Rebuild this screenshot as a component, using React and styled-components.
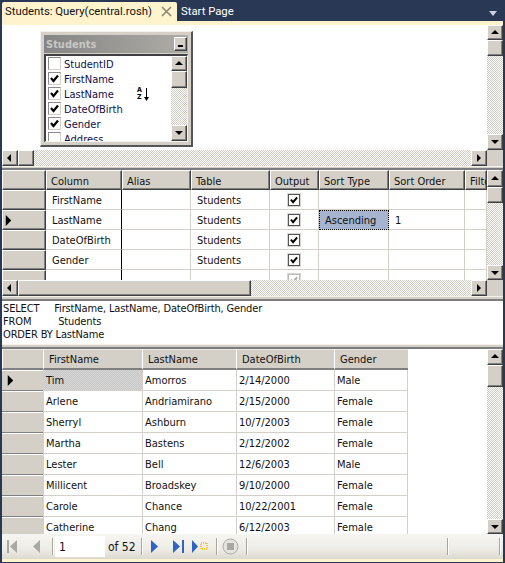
import React from "react";
import styled, { createGlobalStyle, css } from "styled-components";

const GlobalStyle = createGlobalStyle`
  html, body {
    margin: 0;
    padding: 0;
    background: #293955;
  }
  * {
    box-sizing: border-box;
  }
`;

const face = "#d4d0c8";
const cream = "#fff3cd";

const dither = css`
  background: repeating-conic-gradient(#cfcbc3 0 25%, #fff 0 50%) 0 0 / 2px 2px;
`;

const bevel = css`
  background: ${face};
  border-top: 1px solid #fff;
  border-left: 1px solid #fff;
  border-right: 1px solid #404040;
  border-bottom: 1px solid #404040;
  box-shadow: inset -1px -1px 0 #808080;
`;

const Page = styled.div`
  width: 505px;
  height: 563px;
  overflow: hidden;
  display: flex;
  flex-direction: column;
  padding: 0 2px 2px;
  background: #293955;
  font-family: "DejaVu Sans Condensed", "DejaVu Sans", sans-serif;
  font-stretch: condensed;
  font-size: 11px;
  color: #111;
`;

const TabStrip = styled.div`
  height: 21px;
  flex: none;
  display: flex;
  align-items: flex-end;
  font-family: Roboto, sans-serif;
  font-stretch: normal;
  font-size: 11.3px;
`;

const ActiveTab = styled.div`
  width: 175px;
  height: 19px;
  display: flex;
  align-items: center;
  justify-content: space-between;
  padding: 0 5px 0 3px;
  background: ${cream};
  border-radius: 2px 2px 0 0;
  white-space: nowrap;
`;

const PlainTab = styled.div`
  height: 19px;
  margin-left: 4px;
  display: flex;
  align-items: center;
  color: #fff;
`;

const StripMenu = styled.div`
  margin: 0 6px 5px auto;
  width: 0;
  height: 0;
  border-left: 4px solid transparent;
  border-right: 4px solid transparent;
  border-top: 5px solid #ced4df;
`;

const CreamBar = styled.div`
  height: ${({ $h }) => $h}px;
  flex: none;
  background: ${cream};
`;

const Splitter = styled.div`
  height: ${({ $h }) => $h}px;
  flex: none;
  background: ${face};
  border-top: 1px solid #f4f2ec;
  border-bottom: 2px solid #7c7c7c;
`;

const PaneRow = styled.div`
  height: ${({ $h }) => $h}px;
  flex: none;
  display: flex;
  overflow: hidden;
  background: #fff;
`;

const PaneBody = styled.div`
  position: relative;
  flex: 1;
  min-width: 0;
  overflow: hidden;
  background: #fff;
`;

const VBar = styled.div`
  width: 16px;
  flex: none;
  display: flex;
  flex-direction: column;
`;

const HBar = styled.div`
  height: 16px;
  flex: none;
  display: flex;
  background: ${face};
`;

const Track = styled.div`
  flex: 1;
  ${dither}
`;

const ArrowButton = styled.div`
  ${bevel}
  flex: none;
  width: ${({ $w }) => $w || 16}px;
  height: ${({ $h }) => $h || 16}px;
  display: flex;
  align-items: center;
  justify-content: center;
`;

const Thumb = styled.div`
  ${bevel}
  flex: none;
  width: ${({ $w }) => ($w ? `${$w}px` : "auto")};
  height: ${({ $h }) => ($h ? `${$h}px` : "auto")};
`;

const Corner = styled.div`
  width: 16px;
  flex: none;
  background: ${face};
`;

const arrowPoints = {
  up: "0,5 4,1 8,5",
  down: "0,2 8,2 4,6",
  left: "5,0 5,8 1,4",
  right: "2,0 2,8 6,4",
};

const Arrow = ({ dir, size = 8 }) => (
  <svg width={size} height={size} viewBox="0 0 8 8">
    <polygon points={arrowPoints[dir]} fill="#000" />
  </svg>
);

const VScroll = ({ upH, thumbH, downH }) => (
  <VBar>
    <ArrowButton $h={upH}>
      <Arrow dir="up" />
    </ArrowButton>
    <Thumb $h={thumbH} />
    <Track />
    <ArrowButton $h={downH}>
      <Arrow dir="down" />
    </ArrowButton>
  </VBar>
);

const HScroll = ({ thumbW }) => (
  <HBar>
    <ArrowButton>
      <Arrow dir="left" />
    </ArrowButton>
    <Thumb $w={thumbW} />
    <Track />
    <ArrowButton>
      <Arrow dir="right" />
    </ArrowButton>
    <Corner />
  </HBar>
);

/* diagram pane */
const TableWindow = styled.div`
  position: absolute;
  left: 38px;
  top: 6px;
  width: 153px;
  height: 116px;
  padding: 3px;
  background: ${face};
  border-top: 1px solid #f4f2ec;
  border-left: 1px solid #f4f2ec;
  border-right: 2px solid #555;
  border-bottom: 2px solid #555;
  display: flex;
  flex-direction: column;
`;

const WindowTitle = styled.div`
  height: 18px;
  flex: none;
  display: flex;
  align-items: center;
  justify-content: space-between;
  padding: 0 1px 0 2px;
  background: linear-gradient(90deg, #858585, #aeaca6);
  color: #c8c8c4;
  font-weight: bold;
  font-size: 11px;
`;

const MinButton = styled.div`
  ${bevel}
  width: 13px;
  height: 14px;
  display: flex;
  align-items: center;
  justify-content: center;
  &::after {
    content: "";
    width: 5px;
    height: 2px;
    margin-top: 3px;
    background: #000;
  }
`;

const WindowList = styled.div`
  flex: 1;
  min-height: 0;
  margin-top: 1px;
  display: flex;
  overflow: hidden;
  background: #fff;
  border-top: 2px solid #404040;
  border-left: 2px solid #404040;
  border-right: 1px solid #f4f2ec;
  border-bottom: 1px solid #f4f2ec;
`;

const FieldList = styled.div`
  position: relative;
  flex: 1;
  overflow: hidden;
`;

const FieldRow = styled.div`
  height: 15px;
  display: flex;
  align-items: center;
  gap: 3px;
  padding-left: 2px;
  color: #10104a;
`;

const FieldName = styled.span`
  padding-top: 2px;
`;

const FieldBox = styled.span`
  width: 13px;
  height: 13px;
  flex: none;
  display: flex;
  align-items: center;
  justify-content: center;
  background: #fff;
  border: 1px solid #8a8a8a;
  border-right-color: #d4d0c8;
  border-bottom-color: #d4d0c8;
`;

const SortIcon = styled.div`
  position: absolute;
  left: 91px;
  top: 31px;
  display: flex;
  align-items: center;
  gap: 2px;
`;

const SortLetters = styled.div`
  display: flex;
  flex-direction: column;
  font-size: 7px;
  line-height: 7px;
  font-weight: bold;
  color: #000;
`;

const CheckMark = ({ size = 9, faded }) => (
  <svg width={size} height={size} viewBox="0 0 9 9">
    <path
      d="M1 4 L3.5 7 L8 1.5"
      fill="none"
      stroke={faded ? "#aaa" : "#000"}
      strokeWidth="2.2"
    />
  </svg>
);

/* criteria and results grids */
const GridRow = styled.div`
  height: ${({ $h }) => $h}px;
  display: grid;
  grid-template-columns: ${({ $cols }) => $cols};
`;

const HeaderCell = styled.div`
  ${bevel}
  display: flex;
  align-items: center;
  padding: 2px 0 0 4px;
  white-space: nowrap;
  overflow: hidden;
`;

const RowHandle = styled.div`
  ${bevel}
  display: flex;
  align-items: center;
`;

const Cell = styled.div`
  display: flex;
  align-items: center;
  justify-content: ${({ $center }) => ($center ? "center" : "flex-start")};
  padding: 2px 0 0 ${({ $pad }) => $pad ?? 6}px;
  border-right: 1px solid ${face};
  border-bottom: 1px solid ${face};
  white-space: nowrap;
  overflow: hidden;
  ${({ $black }) => $black && "border-right: 1px solid #000;"}
  ${({ $picked }) =>
    $picked &&
    css`
      background: #a6b4cf;
      outline: 1px dotted #000;
      outline-offset: -1px;
    `}
`;

const OutputBox = styled.span`
  width: 12px;
  height: 12px;
  margin-top: -2px;
  display: flex;
  align-items: center;
  justify-content: center;
  background: #fff;
  border: 1px solid ${({ $faded }) => ($faded ? "#bbb" : "#555")};
  box-shadow: 0 0 0 1px #d8d6d0;
`;

const ResultHead = styled.div`
  display: flex;
  align-items: center;
  padding: 2px 0 0 5px;
  background: ${face};
  border-left: 1px solid #fff;
  border-bottom: 2px solid #808080;
  box-shadow: inset 0 1px 0 #e8e6e0;
`;

const ResultHandle = styled.div`
  display: flex;
  align-items: center;
  padding-left: 3px;
  background: ${face};
  border-top: 1px solid #fff;
  border-bottom: 1px solid #808080;
`;

const ResultCell = styled.div`
  display: flex;
  align-items: center;
  padding-left: 2px;
  border-left: 1px solid ${face};
  border-bottom: 1px solid ${face};
  white-space: nowrap;
  ${({ $current }) =>
    $current &&
    css`
      background: repeating-conic-gradient(#c6c6c6 0 25%, #d8d8d8 0 50%) 0 0 / 2px 2px;
    `}
  &:last-child {
    border-right: 1px solid ${face};
  }
`;

const ResultsTable = styled.div`
  width: 406px;
`;

const SqlPane = styled.div`
  height: 43px;
  flex: none;
  padding: 1px 1px 0;
  background: #fff;
  line-height: 13px;
  letter-spacing: -0.15px;
  white-space: pre;
`;

/* record navigator */
const NavBar = styled.div`
  height: 25px;
  flex: none;
  display: flex;
  align-items: center;
  padding-left: 4px;
  background: linear-gradient(#f6f5f1, #eeece6 60%, #dcd9cf);
`;

const NavSep = styled.span`
  width: 1px;
  height: 17px;
  flex: none;
  margin: ${({ $m }) => $m};
  background: #a8a69e;
  box-shadow: 1px 0 0 #fff;
`;

const NavIcon = styled.span`
  display: flex;
  flex: none;
  width: ${({ $w }) => $w}px;
  justify-content: center;
  margin-left: ${({ $ml }) => $ml || 0}px;
`;

const NavInput = styled.div`
  width: 50px;
  height: 21px;
  flex: none;
  margin-left: 2px;
  display: flex;
  align-items: center;
  padding-left: 4px;
  font-size: 12px;
  background: #fff;
`;

const NavText = styled.span`
  width: 27px;
  flex: none;
  margin-left: 3px;
  font-size: 12px;
  white-space: nowrap;
`;

const criteriaCols = "44px 76px 69px 79px 49px 70px 76px 1fr";
const criteriaHeads = ["Column", "Alias", "Table", "Output", "Sort Type", "Sort Order", "Filter"];
const criteriaRows = ["FirstName", "LastName", "DateOfBirth", "Gender", ""];

const resultCols = "41px 99px 94px 98px 74px";
const resultHeads = ["FirstName", "LastName", "DateOfBirth", "Gender"];
const students = [
  ["Tim", "Amorros", "2/14/2000", "Male"],
  ["Arlene", "Andriamirano", "2/15/2000", "Female"],
  ["Sherryl", "Ashburn", "10/7/2003", "Female"],
  ["Martha", "Bastens", "2/12/2002", "Female"],
  ["Lester", "Bell", "12/6/2003", "Male"],
  ["Millicent", "Broadskey", "9/10/2000", "Female"],
  ["Carole", "Chance", "10/22/2001", "Female"],
  ["Catherine", "Chang", "6/12/2003", "Female"],
];

const fields = [
  ["StudentID", false],
  ["FirstName", true],
  ["LastName", true],
  ["DateOfBirth", true],
  ["Gender", true],
  ["Address", false],
];

const NavGlyph = ({ kind, off }) => {
  const fill = off ? "#a9a9a4" : "#2f63c4";
  if (kind === "first")
    return (
      <svg width="11" height="13" viewBox="0 0 11 13">
        <rect x="0" y="0" width="2" height="13" fill={fill} />
        <polygon points="10,0 10,13 3,6.5" fill={fill} />
      </svg>
    );
  if (kind === "prev")
    return (
      <svg width="8" height="13" viewBox="0 0 8 13">
        <polygon points="7,0 7,13 0,6.5" fill={fill} />
      </svg>
    );
  if (kind === "next")
    return (
      <svg width="8" height="13" viewBox="0 0 8 13">
        <polygon points="1,0 1,13 8,6.5" fill={fill} />
      </svg>
    );
  if (kind === "last")
    return (
      <svg width="11" height="13" viewBox="0 0 11 13">
        <polygon points="0,0 0,13 7,6.5" fill={fill} />
        <rect x="9" y="0" width="2" height="13" fill={fill} />
      </svg>
    );
  if (kind === "new")
    return (
      <svg width="16" height="13" viewBox="0 0 16 13">
        <polygon points="0,0 0,13 6,6.5" fill={fill} />
        <rect x="9" y="3" width="6" height="6" fill="none" stroke="#f0c63c" strokeWidth="2" strokeDasharray="1 1" />
      </svg>
    );
  return (
    <svg width="17" height="17" viewBox="0 0 17 17">
      <circle cx="8.5" cy="8.5" r="7.5" fill="#e6e4de" stroke="#a9a9a4" />
      <rect x="5" y="5" width="7" height="7" fill="#a9a9a4" />
    </svg>
  );
};

const App = () => (
  <Page>
    <GlobalStyle />
    <TabStrip>
      <ActiveTab>
        Students: Query(central.rosh)
        <svg width="11" height="11" viewBox="0 0 11 11">
          <path d="M1 1 L10 10 M10 1 L1 10" stroke="#8a8676" strokeWidth="1.6" />
        </svg>
      </ActiveTab>
      <PlainTab>Start Page</PlainTab>
      <StripMenu />
    </TabStrip>
    <CreamBar $h={4} />

    <PaneRow $h={125}>
      <PaneBody>
        <TableWindow>
          <WindowTitle>
            Students
            <MinButton />
          </WindowTitle>
          <WindowList>
            <FieldList>
              {fields.map(([name, on]) => (
                <FieldRow key={name}>
                  <FieldBox>{on && <CheckMark />}</FieldBox>
                  <FieldName>{name}</FieldName>
                </FieldRow>
              ))}
              <SortIcon>
                <SortLetters>
                  <span>A</span>
                  <span>Z</span>
                </SortLetters>
                <svg width="5" height="13" viewBox="0 0 5 13">
                  <path d="M2.5 0 V10" stroke="#000" />
                  <polygon points="0,9 5,9 2.5,13" fill="#000" />
                </svg>
              </SortIcon>
            </FieldList>
            <VScroll upH={15} thumbH={17} downH={16} />
          </WindowList>
        </TableWindow>
      </PaneBody>
      <VScroll upH={15} thumbH={16} downH={16} />
    </PaneRow>
    <HScroll thumbW={16} />
    <Splitter $h={4} />

    <PaneRow $h={110}>
      <PaneBody>
        <GridRow $h={20} $cols={criteriaCols}>
          <HeaderCell />
          {criteriaHeads.map((head) => (
            <HeaderCell key={head}>{head}</HeaderCell>
          ))}
        </GridRow>
        {criteriaRows.map((name, i) => (
          <GridRow key={i} $h={20} $cols={criteriaCols}>
            <RowHandle>{name === "LastName" && <Arrow dir="right" size={11} />}</RowHandle>
            <Cell $black>{name}</Cell>
            <Cell />
            <Cell>{name && "Students"}</Cell>
            <Cell $center $pad={0}>
              <OutputBox $faded={!name}>
                <CheckMark size={8} faded={!name} />
              </OutputBox>
            </Cell>
            <Cell $picked={name === "LastName"}>{name === "LastName" && "Ascending"}</Cell>
            <Cell>{name === "LastName" && "1"}</Cell>
            <Cell />
          </GridRow>
        ))}
      </PaneBody>
      <VScroll upH={17} thumbH={16} downH={15} />
    </PaneRow>
    <HScroll thumbW={233} />
    <Splitter $h={5} />

    <SqlPane>
      {"SELECT     FirstName, LastName, DateOfBirth, Gender\nFROM         Students\nORDER BY LastName"}
    </SqlPane>
    <Splitter $h={5} />

    <PaneRow $h={185}>
      <PaneBody>
        <ResultsTable>
          <GridRow $h={21} $cols={resultCols}>
            <ResultHead />
            {resultHeads.map((head) => (
              <ResultHead key={head}>{head}</ResultHead>
            ))}
          </GridRow>
          {students.map((row, i) => (
            <GridRow key={row[0]} $h={21} $cols={resultCols}>
              <ResultHandle>{i === 0 && <Arrow dir="right" size={11} />}</ResultHandle>
              {row.map((value, j) => (
                <ResultCell key={j} $current={i === 0 && j === 0}>
                  {value}
                </ResultCell>
              ))}
            </GridRow>
          ))}
        </ResultsTable>
      </PaneBody>
      <VScroll upH={16} thumbH={22} downH={15} />
    </PaneRow>

    <NavBar>
      <NavIcon $w={11} $ml={1}>
        <NavGlyph kind="first" off />
      </NavIcon>
      <NavIcon $w={8} $ml={15}>
        <NavGlyph kind="prev" off />
      </NavIcon>
      <NavSep $m="0 0 0 11px" />
      <NavInput>1</NavInput>
      <NavText>of 52</NavText>
      <NavSep $m="0 0 0 6px" />
      <NavIcon $w={8} $ml={8}>
        <NavGlyph kind="next" />
      </NavIcon>
      <NavIcon $w={11} $ml={15}>
        <NavGlyph kind="last" />
      </NavIcon>
      <NavIcon $w={16} $ml={8}>
        <NavGlyph kind="new" />
      </NavIcon>
      <NavSep $m="0 0 0 8px" />
      <NavIcon $w={17} $ml={5}>
        <NavGlyph kind="stop" />
      </NavIcon>
      <NavSep $m="0 0 0 7px" />
      <NavSep $m="0 0 0 200px" />
      <NavSep $m="0 0 0 51px" />
    </NavBar>
    <CreamBar $h={3} />
  </Page>
);

export default App;
